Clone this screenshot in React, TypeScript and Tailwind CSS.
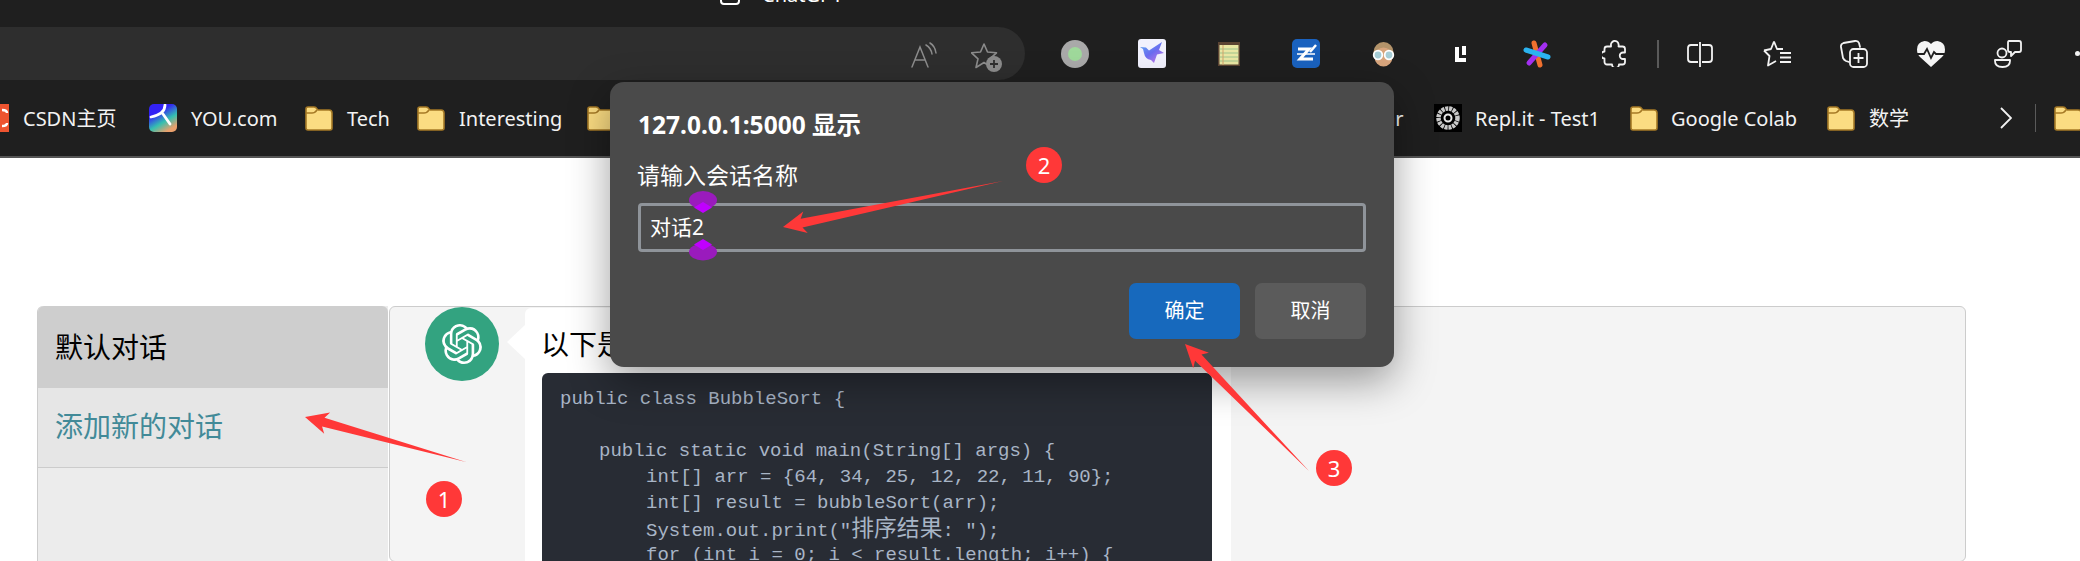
import { SiOpenai } from "react-icons/si";

const uiFont = "font-['Noto_Sans','Noto_Sans_CJK_SC',sans-serif]";

function Folder({ className = "" }: { className?: string }) {
  return (
    <svg viewBox="0 0 28 25" className={`w-[28px] h-[25px] shrink-0 ${className}`}>
      <path d="M1 6V3q0-2 2-2h6q2 0 3 2l1 1h11q3 0 3 3v15q0 2-2 2H3q-2 0-2-2z" fill="#fbdc82" stroke="#a67a26" strokeWidth="1.6" />
      <path d="M1 7h6q3 0 5-3" fill="none" stroke="#a67a26" strokeWidth="1.4" />
    </svg>
  );
}

function Bookmark({ label, className = "" }: { label: string; className?: string }) {
  return <span className={`mt-[2px] text-[20px] leading-none text-[#f2f2f2] whitespace-nowrap shrink-0 ${className}`}>{label}</span>;
}

function arrowPoints(tx: number, ty: number, px: number, py: number) {
  const len = Math.hypot(px - tx, py - ty);
  const dx = (px - tx) / len;
  const dy = (py - ty) / len;
  const at = (back: number, side: number) =>
    `${px - dx * back - dy * side},${py - dy * back + dx * side}`;
  return [at(0, 0), at(23, 11), at(19, 4.5), [tx, ty].join(","), at(19, -4.5), at(23, -11)].join(" ");
}

function Badge({ n, className }: { n: string; className: string }) {
  return (
    <div className={`absolute w-[36px] h-[36px] rounded-full bg-[#ff3838] text-white text-[22px] leading-none flex items-center justify-center ${className}`}>
      {n}
    </div>
  );
}

function Toolbar() {
  return (
    <div className="flex items-center h-[53px] bg-[#1f1f1f]">
      <div className="w-[1025px] h-[53px] shrink-0 bg-[#2e2e2e] rounded-r-[30px] flex items-center justify-end pr-[23px]">
        {/* read aloud */}
        <svg viewBox="0 0 26 26" className="w-[26px] h-[26px] mr-[34px] mt-[2px]" fill="none" stroke="#8c8c8c" strokeWidth="1.5" strokeLinecap="round">
          <path d="M1 25 9 5l8 20M4 18h10" />
          <path d="M15 3q5 3 6 9M19 1q5 3 6 10" />
        </svg>
        {/* star with plus */}
        <svg viewBox="0 0 31 30" className="w-[31px] h-[30px] mt-[6px]">
          <path d="M13 2l3.5 8 9 .8-6.8 6 2 8.7L13 20.500 5 25.500l2-8.700-6.500-6 9-.8z" fill="none" stroke="#8c8c8c" strokeWidth="1.6" strokeLinejoin="round" />
          <circle cx="23" cy="22" r="8" fill="#8c8c8c" />
          <path d="M23 18v8M19 22h8" stroke="#2e2e2e" strokeWidth="1.8" />
        </svg>
      </div>
      {/* green disc */}
      <div className="ml-[36px] w-[28px] h-[28px] shrink-0 rounded-full bg-[#a9a9a9] flex items-center justify-center">
        <div className="w-[14px] h-[14px] rounded-full bg-[#9fd99b]" />
      </div>
      {/* bird */}
      <svg viewBox="0 0 28 29" className="ml-[49px] w-[28px] h-[29px] shrink-0">
        <defs>
          <linearGradient id="bird" x1="0" y1="0" x2="0.8" y2="1">
            <stop offset="0" stopColor="#5aaef0" />
            <stop offset="0.55" stopColor="#6a6cf0" />
            <stop offset="1" stopColor="#c27ae8" />
          </linearGradient>
        </defs>
        <rect width="28" height="29" rx="3" fill="#f1f1fd" />
        <path d="M2 8l6 .5 3 3L24 3l-3 8 5 3-7 1.500-3 8.500-3-3q-6-1-7-7l-1-4z" fill="url(#bird)" />
      </svg>
      {/* notepad */}
      <svg viewBox="0 0 22 24" className="ml-[52px] w-[22px] h-[24px] shrink-0">
        <rect width="22" height="24" fill="#5b4433" />
        <rect x="1.500" y="3" width="19" height="19.500" fill="#e9e7a4" />
        <path d="M2 7h18M2 11h18M2 15h18M2 19h18" stroke="#9ec48c" strokeWidth="1.200" />
        <path d="M5 3v20" stroke="#d3a36a" strokeWidth="1" />
      </svg>
      {/* blue z */}
      <svg viewBox="0 0 28 29" className="ml-[52px] w-[28px] h-[29px] shrink-0">
        <rect width="28" height="29" rx="5" fill="#1a62bf" />
        <path d="M6 10h11L8 20h13" fill="none" stroke="#fff" strokeWidth="3" />
        <path d="M5 15h18" stroke="#fff" strokeWidth="1.500" />
        <path d="M18 13l6-7" stroke="#fff" strokeWidth="2.500" />
      </svg>
      {/* avatar with glasses */}
      <svg viewBox="0 0 25 26" className="ml-[51px] w-[25px] h-[26px] shrink-0">
        <circle cx="12.500" cy="11" r="10" fill="#b3936a" />
        <ellipse cx="12.500" cy="16" rx="9" ry="9.500" fill="#d8a57d" />
        <circle cx="7" cy="14" r="4.300" fill="#a6cdd6" stroke="#fff" strokeWidth="1.800" />
        <circle cx="18" cy="14" r="4.300" fill="#a6cdd6" stroke="#fff" strokeWidth="1.800" />
      </svg>
      {/* L tile */}
      <svg viewBox="0 0 11 16" className="ml-[59px] w-[11px] h-[16px] shrink-0">
        <path d="M0 1h4v11h7v4H0z" fill="#fff" />
        <path d="M7 0h4v9H7z" fill="#fff" />
      </svg>
      {/* asterisk */}
      <svg viewBox="0 0 28 28" className="ml-[57px] w-[28px] h-[28px] shrink-0" strokeLinecap="round" strokeWidth="5">
        <path d="M11 3l6 22" stroke="#f0702e" />
        <path d="M22 5 6 23" stroke="#a22ff0" />
        <path d="M3 10l22 7" stroke="#2bb3f0" />
      </svg>
      {/* extensions */}
      <svg viewBox="0 0 25 27" className="ml-[51px] w-[25px] h-[27px] shrink-0" fill="none" stroke="#f2f2f2" strokeWidth="1.800" strokeLinejoin="round">
        <path d="M9 5.500a3.800 3.800 0 0 1 7.500-1.500q.3 1.500 0 2.500h4q2.500 0 2.500 2.500v3.500h-2a3.200 3.200 0 0 0 0 6.500h2v3q0 2.500-2.500 2.500H17a3.500 3.500 0 0 1-7 0H5a2.500 2.500 0 0 1-2.500-2.500v-3.500a3.500 3.500 0 0 1 0-7V9Q2.500 6.500 5 6.500h4z" />
      </svg>
      <div className="ml-[30px] w-[2px] h-[28px] shrink-0 bg-[#5a5a5a]" />
      {/* split screen */}
      <svg viewBox="0 0 26 26" className="ml-[28px] w-[26px] h-[26px] shrink-0" fill="none" stroke="#f2f2f2" strokeWidth="1.800">
        <path d="M11 4H4q-3 0-3 3v11q0 3 3 3h7M15 4h7q3 0 3 3v11q0 3-3 3h-7" />
        <path d="M13 1v25" />
      </svg>
      {/* favorites */}
      <svg viewBox="0 0 28 27" className="ml-[50px] w-[28px] h-[27px] shrink-0" fill="none" stroke="#f2f2f2" strokeWidth="1.800" strokeLinejoin="round">
        <path d="M11 1.500l3 7.500h6M1 10.500l7-1.500L11 1.500M1 10.500l5.500 5.500-1.500 9.500 8-4.500" />
        <path d="M17 13h11M17 17.500h11M17 22h11" />
      </svg>
      {/* collections */}
      <svg viewBox="0 0 28 28" className="ml-[49px] w-[28px] h-[28px] shrink-0" fill="none" stroke="#f2f2f2" strokeWidth="1.800">
        <path d="M9 22l-3-1q-2-1-3-3L1 7q-.5-3 2.500-4L15 1q3-.5 4 2l1 4" strokeLinecap="round" />
        <rect x="10" y="9" width="17" height="18" rx="3.500" />
        <path d="M18.500 13v10M13.500 18h10" />
      </svg>
      {/* health */}
      <svg viewBox="0 0 28 26" className="ml-[49px] w-[28px] h-[26px] shrink-0">
        <path d="M14 26 3 16Q0 13 0 8.500 0 1 7.500 0 11.500 0 14 3 16.500 0 20.500 0 28 1 28 8.500q0 4.500-3 7.500z" fill="#f5f5f5" />
        <path d="M0 13h7l3-5 4 9 3-6 2 2h9" fill="none" stroke="#1f1f1f" strokeWidth="1.800" />
      </svg>
      {/* feedback */}
      <svg viewBox="0 0 28 28" className="ml-[49px] w-[28px] h-[28px] shrink-0" fill="none" stroke="#f2f2f2" strokeWidth="1.800" strokeLinejoin="round">
        <circle cx="8" cy="13" r="4.500" />
        <path d="M1 20h15v1q0 6-7.500 6T1 21z" />
        <path d="M15 1h10q2 0 2 2v7q0 2-2 2h-4l-4 4v-4h-1q-2 0-2-2V3q0-2 1-2z" />
      </svg>
      <div className="ml-[53px] w-[5px] h-[5px] shrink-0 rounded-full bg-[#f2f2f2]" />
    </div>
  );
}

function BookmarksBar() {
  return (
    <div className="flex items-center h-[76px] bg-[#1f1f1f] border-b-2 border-[#555555] box-content">
      <svg viewBox="0 0 9 28" className="w-[9px] h-[28px] shrink-0">
        <rect width="9" height="28" fill="#ee5430" />
        <path d="M2 6q5 0 5 3M2 22q5 0 5-3" fill="none" stroke="#fff" strokeWidth="2.500" />
      </svg>
      <Bookmark label="CSDN主页" className="ml-[14px] w-[97px]" />
      <svg viewBox="0 0 28 28" className="ml-[29px] w-[28px] h-[28px] shrink-0">
        <defs>
          <linearGradient id="you" x1="0" y1="0" x2="0.6" y2="1">
            <stop offset="0.35" stopColor="#3322f5" />
            <stop offset="0.7" stopColor="#35c0b0" />
            <stop offset="1" stopColor="#e9a06c" />
          </linearGradient>
        </defs>
        <rect width="28" height="28" rx="5" fill="url(#you)" />
        <path d="M16 1q0 9-14 12M14 10l7 10" fill="none" stroke="#fff" strokeWidth="2.800" strokeLinecap="round" />
      </svg>
      <Bookmark label="YOU.com" className="ml-[14px] w-[85px]" />
      <Folder className="ml-[29px]" />
      <Bookmark label="Tech" className="ml-[14px] w-[41px]" />
      <Folder className="ml-[29px]" />
      <Bookmark label="Interesting" className="ml-[14px] w-[99px]" />
      <Folder className="ml-[29px]" />
      <Bookmark label="Calendar" className="ml-[704px] w-[80px] text-right" />
      <svg viewBox="0 0 28 28" className="ml-[35px] w-[28px] h-[28px] shrink-0">
        <rect width="28" height="28" fill="#000" />
        <circle cx="14" cy="14" r="9.500" fill="none" stroke="#c9c9c9" strokeWidth="4.500" strokeDasharray="3 0.800" />
        <circle cx="14" cy="14" r="3.500" fill="none" stroke="#e8e8e8" strokeWidth="2" />
      </svg>
      <Bookmark label="Repl.it - Test1" className="ml-[13px] w-[124px]" />
      <Folder className="ml-[31px]" />
      <Bookmark label="Google Colab" className="ml-[13px] w-[127px]" />
      <Folder className="ml-[29px]" />
      <Bookmark label="数学" className="ml-[14px] w-[42px]" />
      <svg viewBox="0 0 12 22" className="ml-[89px] w-[12px] h-[22px] shrink-0" fill="none" stroke="#f2f2f2" strokeWidth="1.800">
        <path d="M1 1l10 10L1 21" />
      </svg>
      <div className="ml-[23px] w-[1px] h-[28px] shrink-0 bg-[#5a5a5a]" />
      <Folder className="ml-[18px]" />
    </div>
  );
}

function Cjk({ children }: { children: string }) {
  return <span className="text-[22.8px] leading-none font-['Noto_Sans_CJK_SC',sans-serif]">{children}</span>;
}

function CodeBlock() {
  return (
    <div className="mt-[9px] w-[670px] h-[220px] bg-[#282c34] rounded-md pt-[13px] pl-[18px] text-[19px] leading-[26px] text-[#a8b5c6] whitespace-pre font-['Liberation_Mono','Noto_Sans_CJK_SC',monospace]">
      <div>public class BubbleSort {"{"}</div>
      <div className="h-[26px]" />
      <div className="ml-[39px]">public static void main(String[] args) {"{"}</div>
      <div className="ml-[86px]">int[] arr = {"{"}64, 34, 25, 12, 22, 11, 90{"}"};</div>
      <div className="ml-[86px]">int[] result = bubbleSort(arr);</div>
      <div className="ml-[86px] h-[26px]">
        System.out.print("<Cjk>排序结果</Cjk>: ");
      </div>
      <div className="ml-[86px]">for (int i = 0; i &lt; result.length; i++) {"{"}</div>
    </div>
  );
}

function Dialog() {
  return (
    <div className={`absolute left-[610px] top-[82px] w-[784px] h-[285px] px-[28px] pt-[29px] rounded-[14px] bg-[#4a4a4a] text-white shadow-[0_14px_40px_rgba(0,0,0,0.38)] ${uiFont}`}>
      <div className="text-[24.5px] leading-[28px] font-bold">127.0.0.1:5000 显示</div>
      <div className="mt-[21px] -ml-px text-[23px] leading-[30px]">请输入会话名称</div>
      <input
        readOnly
        value="对话2"
        className="mt-[13px] block w-full h-[49px] pl-[9px] pb-[4px] bg-transparent border-[3px] border-[#8f949a] rounded-[4px] text-[21px] text-white outline-none"
      />
      <div className="mt-[31px] flex justify-end gap-[15px]">
        <button className="w-[111px] h-[56px] rounded-[7px] bg-[#1769bd] text-[20px] text-white">确定</button>
        <button className="w-[111px] h-[56px] rounded-[7px] bg-[#5b5b5b] text-[20px] text-white">取消</button>
      </div>
    </div>
  );
}

export default function App() {
  return (
    <div className={`relative w-[2080px] h-[561px] overflow-hidden bg-white ${uiFont}`}>
      {/* tab strip, only the bottom of the tab is in view */}
      <div className="flex h-[27px] overflow-hidden bg-[#1f1f1f] pl-[720px]">
        <div className="w-[20px] h-[20px] -mt-[15px] rounded-[4px] border-2 border-white" />
        <span className="ml-[22px] -mt-[17px] text-[20px] leading-[24px] text-white">ChatGPT</span>
      </div>
      <Toolbar />
      <BookmarksBar />

      <div className="flex pl-[37px] pt-[148px]">
        {/* Sidebar */}
        <div className="w-[351px] h-[256px] shrink-0 bg-[#ececec] border-l border-[#cccccc] rounded-tl-md">
          <div className="h-[82px] bg-[#cecece] rounded-t-md pl-[17px] flex items-center text-[28px] text-black">默认对话</div>
          <div className="h-[80px] bg-[#e6e6e6] border-b border-[#cccccc] pl-[17px] pb-[3px] flex items-center text-[28px] text-[#428a98]">添加新的对话</div>
        </div>

        {/* Main Content Area */}
        <div className="ml-px w-[1577px] h-[256px] shrink-0 flex items-start pl-[35px] bg-[#f4f4f4] border border-[#cccccc] rounded-md">
          <div className="w-[74px] h-[74px] shrink-0 rounded-full bg-[#33a380] flex items-center justify-center">
            <SiOpenai className="w-[40px] h-[40px] text-white" />
          </div>
          <div className="ml-[8px] mt-[18px] w-0 h-0 shrink-0 border-y-[17px] border-y-transparent border-r-[18px] border-r-white" />
          <div className="mt-px w-[706px] h-[260px] shrink-0 bg-white rounded-md pl-[17px] pt-[16px]">
            <div className="-ml-px text-[28px] leading-[40px] text-black whitespace-nowrap">以下是一个冒泡排序的示例代码</div>
            <CodeBlock />
          </div>
        </div>
      </div>

      <Dialog />

      {/* selection handles on the input */}
      <svg viewBox="0 0 28 70" className="absolute left-[689px] top-[191px] w-[28px] h-[70px]">
        <ellipse cx="14" cy="9" rx="14" ry="9" fill="#9a1bbd" />
        <path d="M14 11l9 5.500-9 5.500-9-5.500z" fill="#c000ff" />
        <ellipse cx="14" cy="61" rx="14" ry="8.500" fill="#9a1bbd" />
        <path d="M14 48l9 5.500-9 5.500-9-5.500z" fill="#c000ff" />
      </svg>

      {/* annotations */}
      <svg viewBox="0 0 2080 561" className="absolute inset-0 w-[2080px] h-[561px] pointer-events-none">
        <polygon points={arrowPoints(466, 462, 305, 417)} fill="#ff3838" />
        <polygon points={arrowPoints(1003, 181, 783, 227)} fill="#ff3838" />
        <polygon points={arrowPoints(1309, 471, 1185, 344)} fill="#ff3838" />
      </svg>
      <Badge n="1" className="left-[426px] top-[481px]" />
      <Badge n="2" className="left-[1026px] top-[147px]" />
      <Badge n="3" className="left-[1316px] top-[450px]" />
    </div>
  );
}
